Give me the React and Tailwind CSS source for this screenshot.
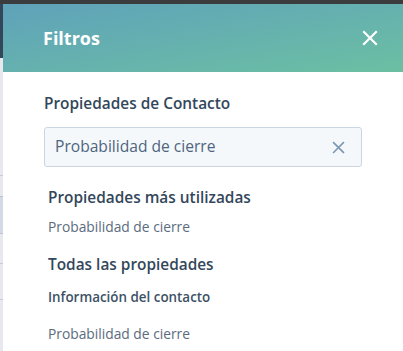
import React from "react";

const Cross = ({ className, stroke = 2 }) => (
  <svg viewBox="0 0 16 16" className={className} fill="none">
    <path d="M2 2L14 14M14 2L2 14" stroke="currentColor" strokeWidth={stroke} strokeLinecap="square" />
  </svg>
);

const App = () => {
  return (
    <div
      className="w-[403px] h-[351px] overflow-hidden flex flex-col bg-white"
      style={{ fontFamily: "'Open Sans', Lato, sans-serif" }}
    >
      <div className="h-[4px] bg-[#3b3c3e]" />
      <div className="flex flex-1">
        {/* page behind the panel */}
        <div className="w-[3px] flex flex-col bg-[#e7e9ee]">
          <div className="h-[54px] bg-[#33475b]" />
          <div className="h-[117px]" />
          <div className="h-px bg-[#c5cbd8]" />
          <div className="h-[20px]" />
          <div className="h-[38px] bg-[#d3dae6] border-t border-b border-[#b8c3d8]" />
          <div className="h-[29px]" />
          <div className="h-px bg-[#c5cbd8]" />
          <div className="h-[35px]" />
          <div className="h-px bg-[#c5cbd8]" />
          <div className="flex-1" />
        </div>

        <div className="flex-1 flex flex-col">
          <div className="h-[68px] flex items-center justify-between pl-[40px] pr-[25px] bg-gradient-to-br from-[#5fa2ba] to-[#6cbfa2]">
            <span className="text-white text-[18px] font-bold">Filtros</span>
            <Cross className="w-[16px] h-[16px] text-white" stroke={2.2} />
          </div>

          <div className="flex flex-col pl-[41px] pr-[41px] pt-[22px] text-[#33475b]">
            <div className="text-[15.4px] font-semibold leading-[20px]">Propiedades de Contacto</div>
            <div className="mt-[13px] h-[40px] flex items-center justify-between bg-[#f5f8fa] border border-[#cbd6e2] rounded-[3px] pl-[10px] pr-[16px]">
              <span className="text-[15.6px] text-[#4d6580]">Probabilidad de cierre</span>
              <Cross className="w-[13px] h-[13px] text-[#7c98b6]" stroke={2} />
            </div>
            <div className="pl-[4px] mt-[21px] text-[15.4px] font-semibold leading-[20px]">Propiedades más utilizadas</div>
            <div className="pl-[4px] mt-[10px] text-[13.8px] text-[#5b6b7e] leading-[18px]">Probabilidad de cierre</div>
            <div className="pl-[4px] mt-[19px] text-[15.4px] font-semibold leading-[20px]">Todas las propiedades</div>
            <div className="pl-[4px] mt-[13px] text-[13.4px] font-semibold text-[#3d5166] leading-[18px]">Información del contacto</div>
            <div className="pl-[4px] mt-[19px] text-[13.8px] text-[#5b6b7e] leading-[18px]">Probabilidad de cierre</div>
          </div>
        </div>
      </div>
    </div>
  );
};

export default App;
